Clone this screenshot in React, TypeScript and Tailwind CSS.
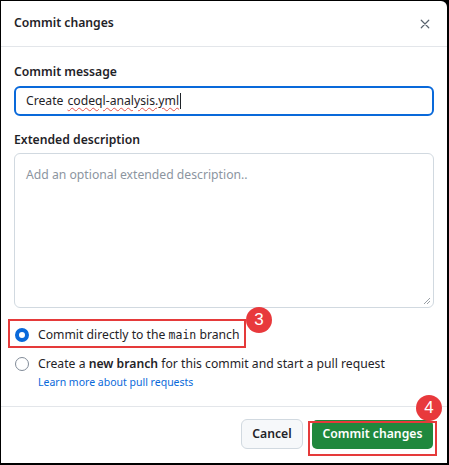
import React from "react";

export default function App() {
  const font = { fontFamily: '"Noto Sans", "Open Sans", sans-serif' };
  return (
    <div className="w-[449px] h-[465px] bg-black pt-px pl-px pr-[2px] pb-[2px]" style={font}>
      <div className="relative w-full h-full bg-white rounded-tr-[6px] flex flex-col text-[#1f2328]">
        {/* header */}
        <div className="h-[46px] shrink-0 flex items-center justify-between pl-[13px] pr-[16px] border-b border-[#e3e6ea]">
          <span className="text-[12.2px] font-semibold">Commit changes</span>
          <svg width="12" height="12" viewBox="0 0 16 16" className="text-[#59636e]">
            <path d="M3 3l10 10M13 3L3 13" stroke="currentColor" strokeWidth="1.6" strokeLinecap="round" />
          </svg>
        </div>
        {/* body */}
        <div className="flex-1 px-[13px] pt-[15px] flex flex-col">
          <label className="text-[12.2px] font-semibold leading-[20px]">Commit message</label>
          <div className="mt-[4px] h-[30px] rounded-[6px] border-2 border-[#0969da] flex items-center pl-[10px] text-[12.2px]">
            <span>Create </span>
            <span className="ml-[4px] underline decoration-wavy decoration-[#e5534b] decoration-1 underline-offset-2">codeql-analysis.yml</span>
            <span className="w-px h-[16px] bg-[#1f2328] ml-px" />
          </div>
          <label className="mt-[14px] text-[12.2px] font-semibold leading-[20px]">Extended description</label>
          <div className="relative mt-[3px] h-[155px] rounded-[6px] border border-[#d1d9e0] pl-[11px] pt-[12px] text-[12.2px] text-[#8c959f]">
            Add an optional extended description..
            <svg width="8" height="8" viewBox="0 0 8 8" className="absolute right-[2px] bottom-[2px]">
              <path d="M7 1L1 7M7 4L4 7" stroke="#9aa0a6" strokeWidth="1" />
            </svg>
          </div>
          <div className="mt-[17px] flex items-center h-[20px] text-[12.2px]">
            <span className="w-[14px] h-[14px] rounded-full border-[4px] border-[#0969da] bg-white ml-px" />
            <span className="ml-[9px]">
              Commit directly to the <span className="text-[11.5px]" style={{ fontFamily: '"DejaVu Sans Mono", monospace' }}>main</span> branch
            </span>
          </div>
          <div className="mt-[9px] flex items-center h-[20px] text-[12.2px]">
            <span className="w-[14px] h-[14px] rounded-full border border-[#818b98] bg-white ml-px" />
            <span className="ml-[9px]">
              Create a <b className="font-semibold">new branch</b> for this commit and start a pull request
            </span>
          </div>
          <a className="ml-[24px] mt-[1px] text-[10.5px] text-[#0969da] leading-[14px]">Learn more about pull requests</a>
        </div>
        {/* footer */}
        <div className="h-[57px] shrink-0 border-t border-[#e3e6ea] flex items-center justify-end gap-[9px] pr-[14px] pb-[2px]">
          <button className="h-[30px] w-[62px] rounded-[6px] border border-[#d1d9e0] bg-[#f6f8fa] text-[12.2px] font-semibold">Cancel</button>
          <button className="h-[29px] w-[121px] rounded-[5px] bg-[#1f883d] text-white text-[12.2px] font-semibold">Commit changes</button>
        </div>

        {/* annotations */}
        <div className="absolute left-[7px] top-[318px] w-[238px] h-[29px] border-2 border-[#e53a3a]" />
        <div className="absolute left-[245px] top-[306px] w-[26px] h-[26px] rounded-full bg-[#e8393c] text-white text-[17px] flex items-center justify-center" style={{ fontFamily: '"Liberation Sans", sans-serif' }}>3</div>
        <div className="absolute left-[307px] top-[420px] w-[129px] h-[35px] border-2 border-[#e53a3a]" />
        <div className="absolute left-[415px] top-[394px] w-[26px] h-[26px] rounded-full bg-[#e8393c] text-white text-[17px] flex items-center justify-center" style={{ fontFamily: '"Liberation Sans", sans-serif' }}>4</div>
      </div>
    </div>
  );
}
